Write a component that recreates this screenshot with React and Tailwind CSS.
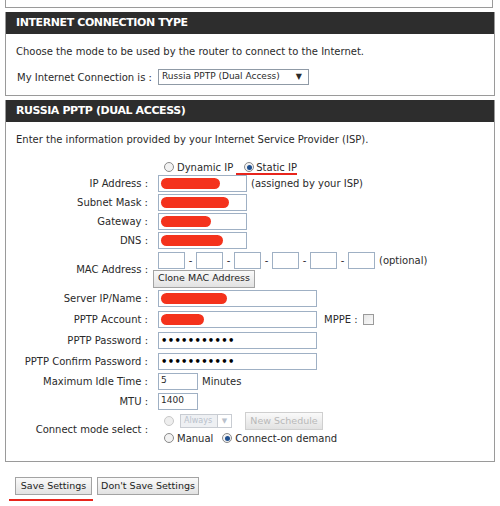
import React from 'react'

const inputBox = 'h-[17px] border border-[#9fb0c4] bg-white flex items-center px-[2px]'

function Blob({ w }) {
  return <div className="h-[11px] rounded-full bg-[#f4321c]" style={{ width: w }} />
}

function Radio({ checked, disabled }) {
  return (
    <span
      className={
        'inline-flex w-[10px] h-[10px] rounded-full border items-center justify-center ' +
        (disabled ? 'border-[#c8c8c8] bg-[#eeeeee]' : 'border-[#8a8a8a] bg-[#f2f2f2]')
      }
    >
      {checked && <span className="w-[5px] h-[5px] rounded-full bg-[#1f4f8f]" />}
    </span>
  )
}

function Btn({ children, className = '', disabled }) {
  return (
    <div
      className={
        'h-[18px] flex items-center justify-center whitespace-nowrap border bg-gradient-to-b from-[#fafafa] to-[#e2e2e2] text-[9.5px] ' +
        (disabled ? 'border-[#cfcfcf] text-[#b8b8b8]' : 'border-[#a3a3a3] text-[#222]') +
        ' ' + className
      }
    >
      {children}
    </div>
  )
}

function Row({ label, h = 19, children }) {
  return (
    <div className="flex items-center" style={{ height: h }}>
      <div className="w-[142px] text-right whitespace-nowrap">{label}</div>
      <div className="ml-[10px] flex items-center">{children}</div>
    </div>
  )
}

function Header({ children }) {
  return (
    <div className="h-[22px] bg-[#2d2d2d] flex items-center pl-[10px] text-white font-bold text-[11px] tracking-[-0.4px]">
      {children}
    </div>
  )
}

export default function App() {
  return (
    <div className="w-[500px] h-[506px] bg-white overflow-hidden font-['DejaVu_Sans',sans-serif] text-[10px] text-[#2a2a2a]">
      <div className="ml-[5px] w-[488px] h-[8px] border-x border-b border-[#9a9a9a]" />

      <section className="ml-[5px] mt-[4px] w-[490px] border-x border-b border-[#9a9a9a]">
        <Header>INTERNET CONNECTION TYPE</Header>
        <div className="pl-[10px] pt-[11px] leading-[14px]">
          Choose the mode to be used by the router to connect to the Internet.
        </div>
        <div className="flex items-center mt-[10px] mb-[10px] h-[16px]">
          <div className="pl-[11px] w-[152px] whitespace-nowrap">My Internet Connection is :</div>
          <div className="w-[151px] h-[16px] border border-[#8f9aa6] flex items-center justify-between pl-[3px] pr-[6px] text-[9px]">
            <span>Russia PPTP (Dual Access)</span>
            <span className="text-[8px]">▼</span>
          </div>
        </div>
      </section>

      <section className="ml-[5px] mt-[4px] w-[490px] border-x border-b border-[#9a9a9a] pb-[14px]">
        <Header>RUSSIA PPTP (DUAL ACCESS)</Header>
        <div className="pl-[10px] pt-[11px] leading-[14px]">
          Enter the information provided by your Internet Service Provider (ISP).
        </div>

        <div className="flex items-center h-[14px] mt-[13px] pl-[158px]">
          <Radio />
          <span className="ml-[3px]">Dynamic IP</span>
          <div className="ml-[11px] flex items-center relative">
            <Radio checked />
            <span className="ml-[2px]">Static IP</span>
            <div className="absolute left-[-8px] right-0 top-[13px] h-[2px] bg-[#e8251c]" />
          </div>
        </div>

        <Row label="IP Address :">
          <div className={inputBox + ' w-[89px]'}><Blob w={59} /></div>
          <span className="ml-[4px]">(assigned by your ISP)</span>
        </Row>
        <Row label="Subnet Mask :">
          <div className={inputBox + ' w-[89px]'}><Blob w={68} /></div>
        </Row>
        <Row label="Gateway :">
          <div className={inputBox + ' w-[89px]'}><Blob w={50} /></div>
        </Row>
        <Row label="DNS :">
          <div className={inputBox + ' w-[89px]'}><Blob w={62} /></div>
        </Row>

        <div className="flex items-center h-[38px]">
          <div className="w-[142px] text-right">MAC Address :</div>
          <div className="ml-[10px] flex flex-col">
            <div className="flex items-center h-[19px]">
              {[0, 1, 2, 3, 4, 5].map((i) => (
                <React.Fragment key={i}>
                  {i > 0 && <span className="w-[11px] text-center">-</span>}
                  <div className={inputBox + ' w-[27px]'} />
                </React.Fragment>
              ))}
              <span className="ml-[4px]">(optional)</span>
            </div>
            <Btn className="-ml-[5px] w-[102px]">Clone MAC Address</Btn>
          </div>
        </div>

        <Row label="Server IP/Name :" h={21}>
          <div className={inputBox + ' w-[159px]'}><Blob w={66} /></div>
        </Row>
        <Row label="PPTP Account :" h={21}>
          <div className={inputBox + ' w-[159px]'}><Blob w={43} /></div>
          <span className="ml-[7px]">MPPE :</span>
          <span className="ml-[5px] w-[11px] h-[11px] border border-[#9a9a9a] bg-gradient-to-br from-[#e6e6e6] to-[#fafafa]" />
        </Row>
        <Row label="PPTP Password :" h={21}>
          <div className={inputBox + ' w-[159px] font-bold tracking-[0.3px] text-[10px] text-black'}>•••••••••••</div>
        </Row>
        <Row label="PPTP Confirm Password :" h={20}>
          <div className={inputBox + ' w-[159px] font-bold tracking-[0.3px] text-[10px] text-black'}>•••••••••••</div>
        </Row>
        <Row label="Maximum Idle Time :" h={20}>
          <div className={inputBox + ' w-[40px] text-[9px]'}>5</div>
          <span className="ml-[4px]">Minutes</span>
        </Row>
        <Row label="MTU :" h={20}>
          <div className={inputBox + ' w-[40px] text-[9px]'}>1400</div>
        </Row>

        <div className="flex items-center h-[36px]">
          <div className="w-[142px] text-right">Connect mode select :</div>
          <div className="ml-[10px] flex flex-col">
            <div className="flex items-center h-[18px] pl-[6px]">
              <Radio disabled />
              <div className="ml-[6px] w-[52px] h-[14px] border border-[#c8ccd2] flex text-[8px] text-[#b9c1cc]">
                <span className="flex-1 bg-[#eef0f3] pl-[3px] flex items-center">Always</span>
                <span className="w-[14px] border-l border-[#c8ccd2] flex items-center justify-center text-[7px]">▼</span>
              </div>
              <Btn disabled className="ml-[13px] w-[78px] h-[16px] text-[8px]">New Schedule</Btn>
            </div>
            <div className="flex items-center h-[16px] pl-[6px]">
              <Radio />
              <span className="ml-[3px]">Manual</span>
              <span className="ml-[9px] flex"><Radio checked /></span>
              <span className="ml-[3px]">Connect-on demand</span>
            </div>
          </div>
        </div>
      </section>

      <div className="flex items-center mt-[15px] ml-[15px] gap-[5px]">
        <div className="relative">
          <Btn className="w-[77px]">Save Settings</Btn>
          <div className="absolute left-[-6px] w-[84px] top-[22px] h-[2px] bg-[#e8251c]" />
        </div>
        <Btn className="w-[102px]">Don't Save Settings</Btn>
      </div>
    </div>
  )
}
